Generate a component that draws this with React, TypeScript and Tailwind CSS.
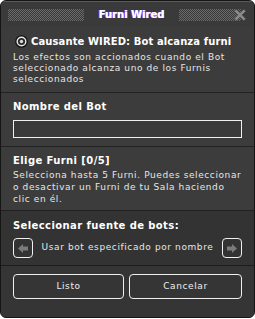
import React from 'react'

const font = { fontFamily: '"DejaVu Sans", Verdana, sans-serif' }

function Dots({ className }: { className: string }) {
  return <div className={`h-[12px] bg-[repeating-conic-gradient(#6a6a6a_0_25%,#393939_0_50%)] bg-[length:2px_2px] ${className}`} />
}

function Radio() {
  return (
    <svg width="13" height="13" viewBox="0 0 13 13" className="shrink-0">
      <circle cx="6.5" cy="6.5" r="6.3" fill="#111" />
      <circle cx="6.5" cy="6.5" r="5" fill="#e8e8e8" />
      <circle cx="6.5" cy="6.5" r="3.6" fill="#2a2a2a" />
      <circle cx="6.5" cy="6.5" r="1.7" fill="#d8d8d8" />
    </svg>
  )
}

function Arrow({ dir }: { dir: 'left' | 'right' }) {
  return (
    <button className="w-[20px] h-[20px] shrink-0 flex items-center justify-center rounded-[4px] border border-[#f0f0f0]">
      <svg width="10" height="9" viewBox="0 0 10 9" className={dir === 'right' ? '' : 'rotate-180'}>
        <path d="M0 2.5h5V0l5 4.5L5 9V6.5H0z" fill="#7a7a7a" />
      </svg>
    </button>
  )
}

export default function App() {
  return (
    <div className="w-[255px] h-[319px] bg-white" style={font}>
      <div className="w-[255px] h-[318px] rounded-[6px] border border-[#151515] bg-[#3c3c3c] overflow-hidden flex flex-col text-[9px] tracking-[0.6px] text-[#e6e6e6]">
        {/* title bar */}
        <div className="h-[26px] shrink-0 flex items-center pl-[7px] pr-[6px] bg-[#3a3a3a] border-t border-[#5a5a5a]">
          <Dots className="w-[76px]" />
          <div className="flex-1 text-center font-bold text-[10px] tracking-normal text-white [text-shadow:-0.6px_0_#ff40ff,0.6px_0_#40c0ff]">Furni Wired</div>
          <Dots className="w-[62px]" />
          <svg width="16" height="16" viewBox="0 0 15 15" className="-ml-[9px]">
            <path d="M2 4l2-2 3.5 3.5L11 2l2 2-3.5 3.5L13 11l-2 2-3.5-3.5L4 13l-2-2 3.5-3.5z" fill="#8a8a8a" stroke="#4a4a4a" strokeWidth="0.8" />
          </svg>
        </div>

        {/* trigger */}
        <div className="px-[12px] pt-[8px] pb-[7px] border-b border-[#222]">
          <div className="flex items-center gap-[3px] h-[12px] pl-[2px]">
            <Radio />
            <span className="whitespace-nowrap font-bold text-[10px] tracking-[0.1px] text-white">Causante WIRED: Bot alcanza furni</span>
          </div>
          <p className="mt-[5px] leading-[11px]">Los efectos son accionados cuando el Bot seleccionado alcanza uno de los Furnis seleccionados</p>
        </div>

        {/* bot name */}
        <div className="px-[12px] pt-[8px] pb-[8px] border-b border-[#222]">
          <div className="font-bold text-[10px] tracking-[0.4px] text-white leading-[12px]">Nombre del Bot</div>
          <input className="mt-[7px] w-full h-[18px] bg-[#3a3a3a] border border-[#f0f0f0] outline-none px-1 text-[9px] text-white" />
        </div>

        {/* furni */}
        <div className="px-[12px] pt-[8px] pb-[5px] border-b border-[#202020]">
          <div className="font-bold text-[10px] tracking-[0.4px] text-white leading-[12px]">Elige Furni [0/5]</div>
          <p className="mt-[2px] leading-[12px]">Selecciona hasta 5 Furni. Puedes seleccionar o desactivar un Furni de tu Sala haciendo clic en él.</p>
        </div>

        {/* bot source */}
        <div className="bg-[#333333] px-[12px] pt-[9px] pb-[7px] border-b border-[#1c1c1c]">
          <div className="font-bold text-[10px] tracking-[0.4px] text-white leading-[12px]">Seleccionar fuente de bots:</div>
          <div className="mt-[6px] flex items-center">
            <Arrow dir="left" />
            <span className="flex-1 text-center">Usar bot especificado por nombre</span>
            <Arrow dir="right" />
          </div>
        </div>

        {/* footer */}
        <div className="flex-1 bg-[#353535] px-[12px] pt-[8px] flex gap-[5px]">
          <button className="w-[111px] h-[25px] rounded-[4px] border border-[#f0f0f0] text-[9px] tracking-[0.6px] text-[#eee]">Listo</button>
          <button className="flex-1 h-[25px] rounded-[4px] border border-[#f0f0f0] text-[9px] tracking-[0.6px] text-[#eee]">Cancelar</button>
        </div>
      </div>
    </div>
  )
}
